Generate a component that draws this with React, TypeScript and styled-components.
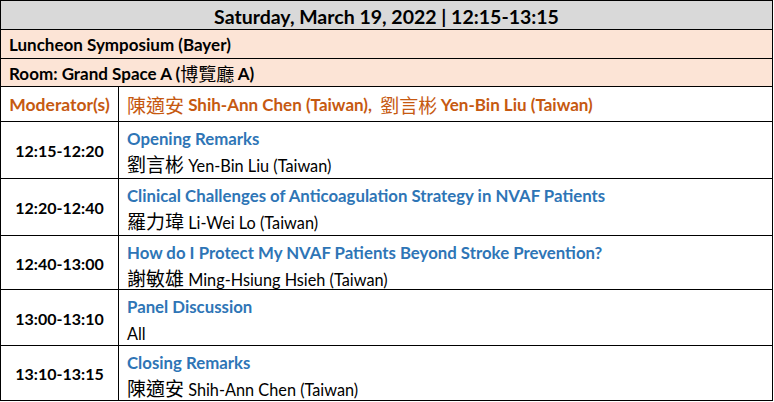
import React from "react";
import styled, { createGlobalStyle } from "styled-components";

interface Session {
  time: string;
  title: string;
  cjk?: string;
  speaker: string;
  height: number;
}

// heights include the 1px bottom rule, so the lines land where the sheet has them
const sessions: Session[] = [
  { time: "12:15-12:20", title: "Opening Remarks", cjk: "劉言彬", speaker: "Yen-Bin Liu (Taiwan)", height: 57 },
  {
    time: "12:20-12:40",
    title: "Clinical Challenges of Anticoagulation Strategy in NVAF Patients",
    cjk: "羅力瑋",
    speaker: "Li-Wei Lo (Taiwan)",
    height: 57,
  },
  {
    time: "12:40-13:00",
    title: "How do I Protect My NVAF Patients Beyond Stroke Prevention?",
    cjk: "謝敏雄",
    speaker: "Ming-Hsiung Hsieh (Taiwan)",
    height: 54,
  },
  { time: "13:00-13:10", title: "Panel Discussion", speaker: "All", height: 56 },
  { time: "13:10-13:15", title: "Closing Remarks", cjk: "陳適安", speaker: "Shih-Ann Chen (Taiwan)", height: 55 },
];

const GlobalStyle = createGlobalStyle`
  * {
    box-sizing: border-box;
  }
  body {
    margin: 0;
    background: #ffffff;
    font-family: Lato, "Noto Sans CJK TC", sans-serif;
    color: #000;
  }
`;

const Sheet = styled.div`
  width: 773px;
  border-top: 1px solid #000;
  border-left: 1px solid #000;
  border-right: 1px solid #000;
  display: flex;
  flex-direction: column;
`;

const Row = styled.div<{ $h: number; $bg?: string }>`
  height: ${(p) => p.$h}px;
  display: flex;
  border-bottom: 1px solid #000;
  background: ${(p) => p.$bg ?? "#ffffff"};
  overflow: hidden;
`;

const HeaderText = styled.div`
  flex: 1;
  display: flex;
  align-items: center;
  justify-content: center;
  padding-top: 2px;
  font-size: 19.5px;
  font-weight: 700;
  white-space: pre;
`;

const BandText = styled.div`
  flex: 1;
  display: flex;
  align-items: center;
  padding: 1px 0 0 8px;
  font-size: 17px;
  font-weight: 700;
  white-space: pre;
`;

const Cjk = styled.span<{ $size?: number }>`
  font-family: "Noto Sans CJK TC", sans-serif;
  font-size: ${(p) => p.$size ?? 19}px;
  font-weight: 400;
  line-height: 1;
`;

const LeftCell = styled.div<{ $color?: string; $size: number }>`
  width: 118px;
  flex: none;
  border-right: 1px solid #000;
  display: flex;
  align-items: center;
  justify-content: center;
  padding-top: 1px;
  color: ${(p) => p.$color ?? "#000"};
  font-size: ${(p) => p.$size}px;
  font-weight: 700;
`;

const ModNames = styled.div`
  flex: 1;
  display: flex;
  align-items: center;
  padding: 1px 0 0 8px;
  color: #c65911;
  font-size: 17px;
  font-weight: 700;
  white-space: pre;
`;

const TalkCell = styled.div`
  flex: 1;
  padding: 4px 0 0 8px;
  display: flex;
  flex-direction: column;
`;

const Title = styled.div`
  color: #2e75b6;
  font-size: 16.8px;
  font-weight: 700;
  line-height: 26px;
  white-space: nowrap;
`;

const Speaker = styled.div`
  font-size: 16.3px;
  line-height: 28px;
  white-space: nowrap;
`;

export default function App() {
  return (
    <>
      <GlobalStyle />
      <Sheet>
        <Row $h={29} $bg="#d9d9d9">
          <HeaderText>Saturday, March 19, 2022 | 12:15-13:15</HeaderText>
        </Row>
        <Row $h={29} $bg="#fce4d6">
          <BandText>Luncheon Symposium (Bayer)</BandText>
        </Row>
        <Row $h={28} $bg="#fce4d6">
          <BandText>
            Room: Grand Space A (<Cjk $size={18}>博覽廳</Cjk> A)
          </BandText>
        </Row>
        <Row $h={35}>
          <LeftCell $color="#c65911" $size={17.5}>
            Moderator(s)
          </LeftCell>
          <ModNames>
            <Cjk>陳適安</Cjk> Shih-Ann Chen (Taiwan),  <Cjk>劉言彬</Cjk> Yen-Bin Liu (Taiwan)
          </ModNames>
        </Row>
        {sessions.map((s) => (
          <Row key={s.time} $h={s.height}>
            <LeftCell $size={16}>{s.time}</LeftCell>
            <TalkCell>
              <Title>{s.title}</Title>
              <Speaker>
                {s.cjk && <Cjk>{s.cjk}</Cjk>}
                {s.cjk ? " " : ""}
                {s.speaker}
              </Speaker>
            </TalkCell>
          </Row>
        ))}
      </Sheet>
    </>
  );
}
